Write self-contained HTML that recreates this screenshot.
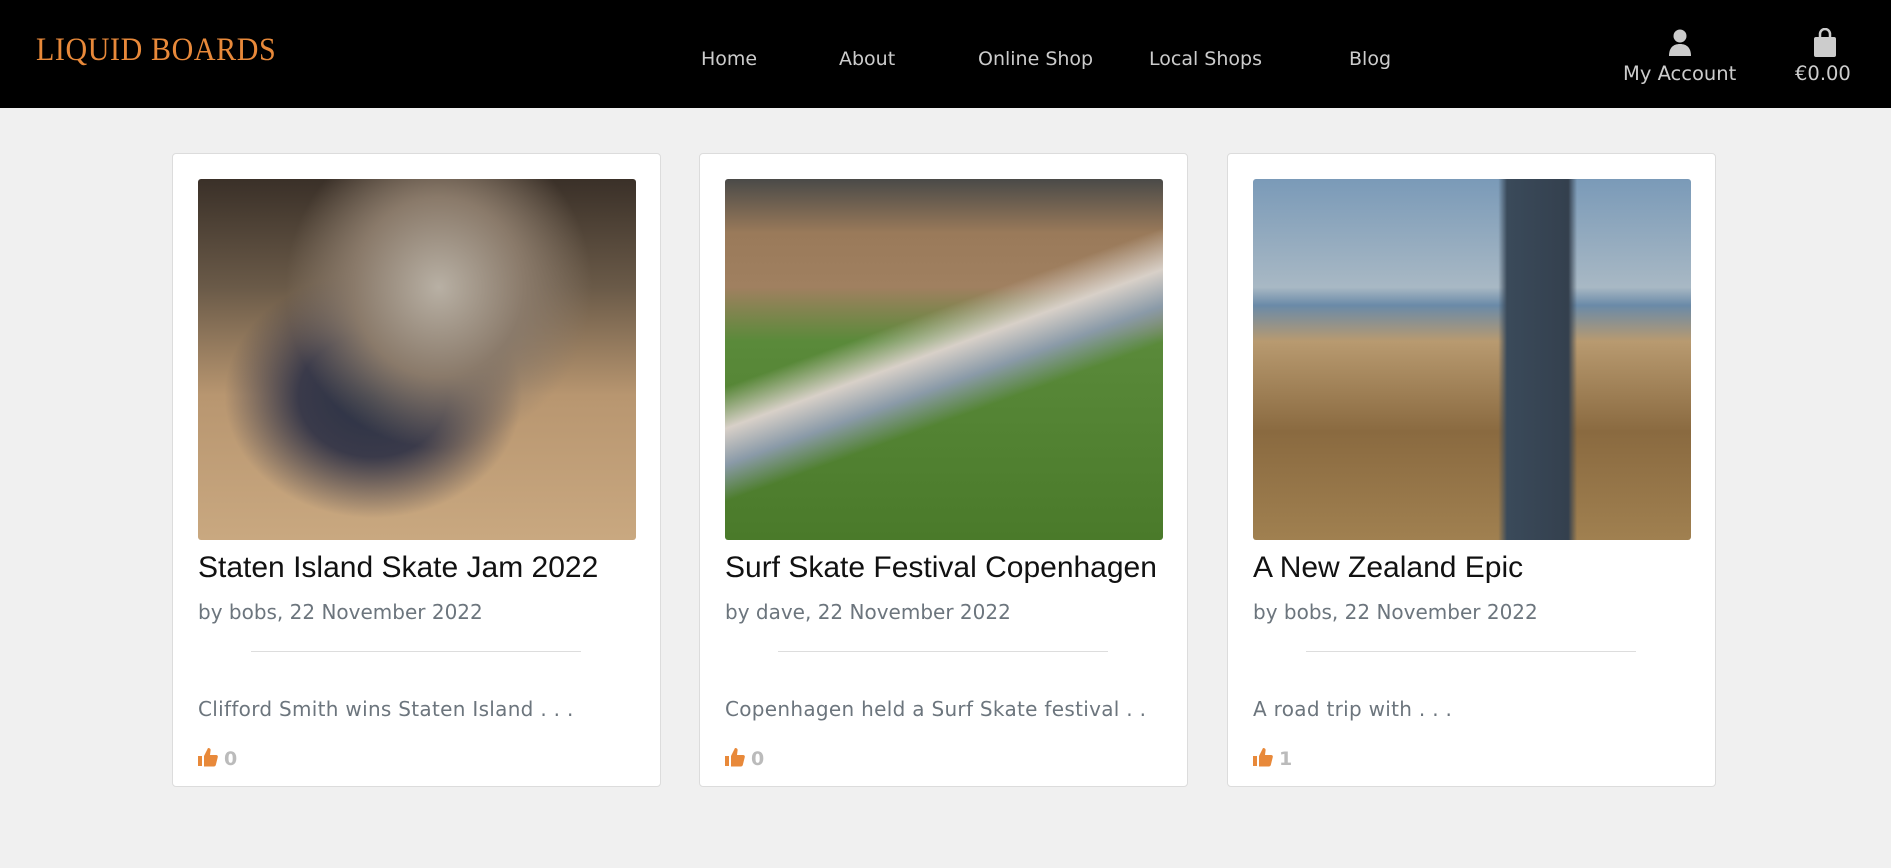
<!DOCTYPE html>
<html><head><meta charset="utf-8"><style>
*{margin:0;padding:0;box-sizing:border-box}
body{width:1891px;height:868px;background:#f0f0f0;font-family:"DejaVu Sans",Verdana,sans-serif;overflow:hidden;position:relative}
.hdr{position:absolute;left:0;top:0;width:1891px;height:108px;background:#000}
.logo{position:absolute;left:36px;top:33px;font-family:"Liberation Serif",serif;color:#e8893a;font-size:30px;letter-spacing:0.6px;transform:scaleY(1.1)}
.nav{position:absolute;top:48px;color:#ccc;font-size:19px}
.card{position:absolute;top:153px;width:489px;height:634px;background:#fff;border:1px solid #dcdcdc;border-radius:4px}
.img{position:absolute;left:25px;top:25px;width:438px;height:361px;border-radius:3px;overflow:hidden}
.t{position:absolute;left:25px;top:397px;font-family:"Liberation Sans",Arial,sans-serif;font-size:30px;color:#111}
.by{position:absolute;left:25px;top:446px;font-size:20px;color:#6c757d}
.hr{position:absolute;left:78px;width:330px;top:497px;border-top:1px solid #ddd}
.ex{position:absolute;left:25px;top:543px;font-size:20px;color:#6c757d;letter-spacing:0.3px}
.lk{position:absolute;left:25px;top:593px;font-size:19px;color:#bbb;font-weight:bold}
.lk svg{vertical-align:-2px;margin-right:6px}
</style></head><body>
<div class="hdr">
<div class="logo">LIQUID BOARDS</div>
<div class="nav" style="left:701px">Home</div>
<div class="nav" style="left:839px">About</div>
<div class="nav" style="left:978px">Online Shop</div>
<div class="nav" style="left:1149px">Local Shops</div>
<div class="nav" style="left:1349px">Blog</div>
<svg style="position:absolute;left:1668px;top:29px" width="24" height="28" viewBox="0 0 24 28"><circle cx="12" cy="7" r="6.5" fill="#ccc"/><path d="M1 27c0-8 4-12 11-12s11 4 11 12z" fill="#ccc"/></svg>
<div class="nav" style="left:1623px;top:62px;font-size:19.5px">My Account</div>
<svg style="position:absolute;left:1813px;top:28px" width="24" height="30" viewBox="0 0 24 30"><path d="M7 10V6a5 5 0 0 1 10 0v4" stroke="#ccc" stroke-width="2.5" fill="none"/><rect x="1" y="9" width="22" height="20" rx="2" fill="#ccc"/></svg>
<div class="nav" style="left:1795px;top:62px;font-size:19.5px">€0.00</div>
</div>

<div class="card" style="left:172px">
<div class="img" style="background:radial-gradient(ellipse at 55% 30%,#b8b0a4 0,#8a7a6a 25%,transparent 45%),radial-gradient(ellipse at 40% 60%,#2a3245 0,#3a3a4a 20%,transparent 40%),linear-gradient(180deg,#3a3028 0%,#6a5a48 30%,#b89670 60%,#c9a880 100%)"></div>
<div class="t">Staten Island Skate Jam 2022</div>
<div class="by">by bobs, 22 November 2022</div>
<div class="hr"></div>
<div class="ex">Clifford Smith wins Staten Island . . .</div>
<div class="lk"><svg width="20" height="20" viewBox="0 0 20 20"><rect x="0" y="9" width="4" height="10" fill="#e8893a"/><path d="M6 9l4-8c2 0 3 1 2.5 3L12 8h6c1.5 0 2 1 1.8 2l-2 8c-.3 1-1 1.5-2 1.5H6z" fill="#e8893a"/></svg>0</div>
</div>

<div class="card" style="left:699px">
<div class="img" style="background:linear-gradient(160deg,transparent 40%,#d8d0c8 48%,#8a9aa8 55%,transparent 62%),linear-gradient(180deg,#4a4a48 0%,#9a7a5a 15%,#a08060 30%,#5a8a3a 45%,#4a7a2a 100%)"></div>
<div class="t">Surf Skate Festival Copenhagen</div>
<div class="by">by dave, 22 November 2022</div>
<div class="hr"></div>
<div class="ex">Copenhagen held a Surf Skate festival . .</div>
<div class="lk"><svg width="20" height="20" viewBox="0 0 20 20"><rect x="0" y="9" width="4" height="10" fill="#e8893a"/><path d="M6 9l4-8c2 0 3 1 2.5 3L12 8h6c1.5 0 2 1 1.8 2l-2 8c-.3 1-1 1.5-2 1.5H6z" fill="#e8893a"/></svg>0</div>
</div>

<div class="card" style="left:1227px">
<div class="img" style="background:linear-gradient(90deg,transparent 56%,#3a4a5a 58%,#34404e 72%,transparent 74%),linear-gradient(180deg,#7a9ab8 0%,#a8b8c4 30%,#6a8aa8 35%,#b89a70 45%,#8a6a40 70%,#a08050 100%)"></div>
<div class="t">A New Zealand Epic</div>
<div class="by">by bobs, 22 November 2022</div>
<div class="hr"></div>
<div class="ex">A road trip with . . .</div>
<div class="lk"><svg width="20" height="20" viewBox="0 0 20 20"><rect x="0" y="9" width="4" height="10" fill="#e8893a"/><path d="M6 9l4-8c2 0 3 1 2.5 3L12 8h6c1.5 0 2 1 1.8 2l-2 8c-.3 1-1 1.5-2 1.5H6z" fill="#e8893a"/></svg>1</div>
</div>
</body></html>
